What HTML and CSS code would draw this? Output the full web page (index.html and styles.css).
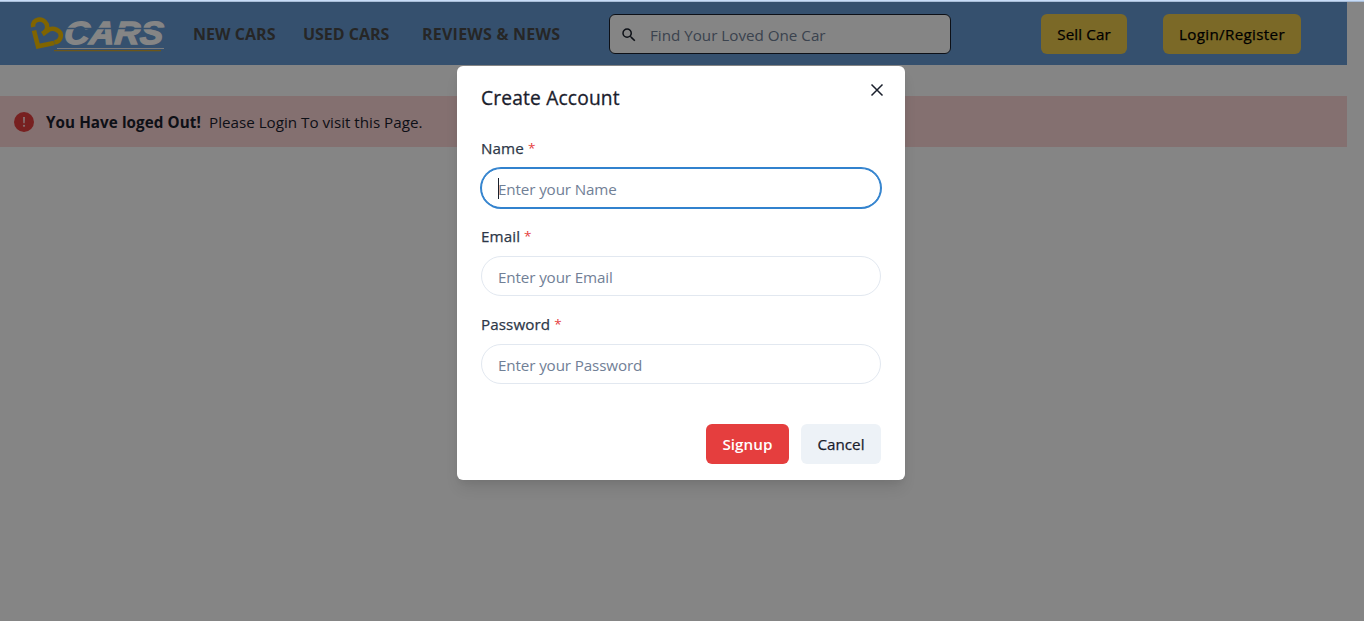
FILE: index.html
```html
<!DOCTYPE html>
<html lang="en">
<head>
<meta charset="utf-8">
<title>Cars</title>
<link rel="stylesheet" href="styles.css">
</head>
<body>
<div class="page">
  <header class="navbar">
    <svg class="logo" width="140" height="40" viewBox="0 0 140 40">
      <g class="heart">
        <path d="M3.200 12C1.500 4 13 1.500 16.800 9.500C18 13 16 17 12.500 19"/>
        <path d="M12.500 19L17.500 15.500C23 11.500 32.500 15.500 30.500 22.500C29.500 25.500 27.500 27.300 24.300 27.300"/>
        <path d="M4 15.500L8 31.300L24 28"/>
      </g>
      <text class="wordmark" x="0" y="0" transform="translate(33.500 29.400) skewX(-5)" textLength="99" lengthAdjust="spacingAndGlyphs">CARS</text>
      <path class="cut" d="M34 13.500H138"/>
      <path class="rule-light" d="M27 33.500H134"/>
      <path class="rule-gold" d="M24 35.600H131"/>
    </svg>
    <nav class="links">
      <a class="link new">NEW CARS</a>
      <a class="link used">USED CARS</a>
      <a class="link reviews">REVIEWS &amp; NEWS</a>
    </nav>
    <div class="search">
      <svg class="search-icon" width="18" height="18" viewBox="0 0 24 24"><path d="M15.500 14h-.79l-.28-.27A6.470 6.470 0 0 0 16 9.500 6.500 6.500 0 1 0 9.500 16c1.610 0 3.090-.59 4.230-1.570l.27.280v.79l5 4.990L20.490 19l-4.990-5zm-6 0C7.010 14 5 11.990 5 9.500S7.010 5 9.500 5 14 7.010 14 9.500 11.990 14 9.500 14z"/></svg>
      <input class="search-input" placeholder="Find Your Loved One Car">
    </div>
    <button class="btn gold sell"><span>Sell Car</span></button>
    <button class="btn gold login"><span>Login/Register</span></button>
  </header>
  <div class="alert">
    <svg class="alert-icon" width="20" height="20" viewBox="0 0 20 20"><circle cx="10" cy="10" r="10"/><path d="M9 5h2l-.3 6.300H9.300z"/><circle class="dot" cx="10" cy="13.800" r="1.100"/></svg>
    <strong class="alert-title">You Have loged Out!</strong>
    <span class="alert-text">Please Login To visit this Page.</span>
  </div>
</div>
<div class="overlay">
  <section class="modal">
    <button class="close"><svg width="14" height="14" viewBox="0 0 14 14"><path d="M1.500 1.500L12.500 12.500M12.500 1.500L1.500 12.500"/></svg></button>
    <h2 class="title"><span>Create Account</span></h2>
    <div class="field">
      <label class="label"><span>Name</span><span class="star">*</span></label>
      <div class="control"><input class="input focused" placeholder="Enter your Name"><span class="caret"></span></div>
    </div>
    <div class="field">
      <label class="label"><span>Email</span><span class="star">*</span></label>
      <div class="control"><input class="input" placeholder="Enter your Email"></div>
    </div>
    <div class="field">
      <label class="label"><span>Password</span><span class="star">*</span></label>
      <div class="control"><input class="input" placeholder="Enter your Password"></div>
    </div>
    <div class="actions">
      <button class="btn signup"><span>Signup</span></button>
      <button class="btn cancel"><span>Cancel</span></button>
    </div>
  </section>
</div>
<div class="strip"></div>
</body>
</html>
```
FILE: styles.css
```css
* { box-sizing: border-box; }
body {
  margin: 0;
  height: 621px;
  overflow: hidden;
  background: #fff;
  color: #1a202c;
  font: 15.200px/24px "Segoe UI", "Open Sans", "Noto Sans", sans-serif;
}
button, input { font: inherit; color: inherit; border: 0; margin: 0; padding: 0; }
.page { width: 1347px; padding-top: 2px; }
.strip { position: absolute; inset: 0 0 auto 0; height: 2px; background: linear-gradient(#c7dcf8 1px, #a9bdd7 1px); }
.navbar { display: flex; align-items: center; height: 63px; padding-left: 30px; background: #669ad3; }
.logo { flex: none; margin-top: 3px; overflow: visible; }
.heart path { fill: none; stroke: #f5c000; stroke-width: 4.600; stroke-linejoin: miter; }
.wordmark { font: italic bold 32px "Liberation Sans", sans-serif; fill: #fff; stroke: #fff; stroke-width: 1.300; }
.cut { stroke: #669ad3; stroke-width: 1.500; }
.rule-light { stroke: #eee; stroke-width: 1; }
.rule-gold { stroke: #d0a62e; stroke-width: 1.400; }
.links { display: flex; margin-left: 23px; width: 416px; padding-top: 1px; color: #4a4a4a; font-size: 16px; font-weight: 700; white-space: nowrap; }
.new { width: 110px; letter-spacing: 0.040px; }
.used { width: 119px; letter-spacing: -0.020px; }
.reviews { letter-spacing: 0.230px; }
.search { display: flex; align-items: center; width: 342px; height: 40px; margin-top: 1px; padding-left: 10px; border: 1px solid #1a202c; border-radius: 6px; background: #fff; }
.search-icon { flex: none; margin-top: 2px; fill: #1a202c; }
.search-input { flex: 1; margin-left: 12px; padding-top: 1px; background: transparent; }
.search-input::placeholder, .input::placeholder { color: #718096; opacity: 1; }
.btn { flex: none; height: 40px; padding-top: 1px; border-radius: 6px; font-weight: 600; line-height: 39px; text-align: center; white-space: nowrap; }
.gold { background: #ecc94b; color: #000; margin-top: 1px; font-weight: 500; -webkit-text-stroke: 0.250px; }
.sell { width: 86px; margin-left: 90px; letter-spacing: 0.100px; }
.login { width: 138px; margin-left: 36px; letter-spacing: 0.320px; }
.alert { display: flex; align-items: center; height: 51px; margin-top: 31px; padding-left: 14px; background: #fed7d7; }
.alert-icon { fill: #e53e3e; }
.alert-icon path, .alert-icon .dot { fill: #fed7d7; }
.alert-title { margin-left: 12px; width: 163px; padding-top: 1px; letter-spacing: 0.080px; white-space: nowrap; }
.alert-text { padding-top: 1px; }
.overlay { position: absolute; inset: 0; display: flex; justify-content: center; align-items: flex-start; padding-top: 66px; padding-right: 2px; background: rgba(0, 0, 0, 0.480); }
.modal { position: relative; width: 448px; height: 414px; padding: 16px 24px; border-radius: 6px; background: #fff; box-shadow: 0 10px 15px -3px rgba(0, 0, 0, 0.100), 0 4px 6px -2px rgba(0, 0, 0, 0.050); }
.close { position: absolute; top: 17px; right: 21px; width: 14px; height: 14px; background: none; }
.close svg { display: block; fill: none; stroke: #1a202c; stroke-width: 1.500; }
.title { margin: 0; height: 54px; font-size: 19.200px; line-height: 32px; font-weight: 500; letter-spacing: 0.170px; -webkit-text-stroke: 0.300px; }
.field { height: 88px; }
.label { display: flex; height: 32px; line-height: 24px; font-weight: 500; color: #2d3748; letter-spacing: 0.100px; -webkit-text-stroke: 0.250px; }
.star { margin-left: 4px; color: #e53e3e; font-size: 13.500px; font-weight: 400; -webkit-text-stroke: 0; }
.control { position: relative; }
.input { display: block; width: 400px; height: 40px; padding: 1px 16px 0; border: 1px solid #e2e8f0; border-radius: 20px; background: #fff; outline: none; letter-spacing: -0.120px; }
.focused { border-color: #3182ce; box-shadow: 0 0 0 1px #3182ce; }
.caret { position: absolute; left: 17px; top: 10px; width: 1px; height: 21px; background: #1a202c; }
.actions { display: flex; justify-content: flex-end; gap: 12px; margin-top: 24px; }
.signup { width: 83px; background: #e53e3e; color: #fff; letter-spacing: 0.080px; }
.cancel { width: 80px; background: #edf2f7; font-weight: 500; -webkit-text-stroke: 0.250px; }
```
